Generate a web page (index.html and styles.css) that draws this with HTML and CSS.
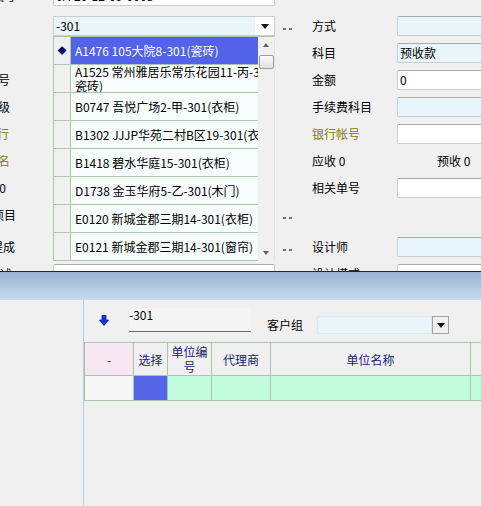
FILE: index.html
```html
<!DOCTYPE html>
<html>
<head>
<meta charset="utf-8">
<link rel="stylesheet" href="styles.css">
</head>
<body>
<div class="top">
  <div class="form">
    <div class="row r0">
      <div class="lclip"><span>单据编号</span></div>
      <div class="spacer"></div>
      <div class="field">0A-20-12-09-0008</div>
    </div>
    <div class="row">
      <div class="lclip"></div>
      <div class="spacer"></div>
      <div class="field combo"><div class="cval">-301</div><div class="carrow"><i class="tri-down"></i></div></div>
      <div class="dots"><i class="dd"></i></div>
      <div class="rlabel">方式</div>
      <div class="field rfield blue"></div>
    </div>
    <div class="row">
      <div class="lclip"></div>
      <div class="spacer"></div>
      <div class="field"></div>
      <div class="dots"></div>
      <div class="rlabel">科目</div>
      <div class="field rfield blue">预收款</div>
    </div>
    <div class="row">
      <div class="lclip e10"><span>房号</span></div>
      <div class="spacer"></div>
      <div class="field"></div>
      <div class="dots"></div>
      <div class="rlabel">金额</div>
      <div class="field rfield">0</div>
    </div>
    <div class="row">
      <div class="lclip e10"><span>等级</span></div>
      <div class="spacer"></div>
      <div class="field"></div>
      <div class="dots"></div>
      <div class="rlabel">手续费科目</div>
      <div class="field rfield blue"></div>
    </div>
    <div class="row">
      <div class="lclip e9 olive"><span>开户银行</span></div>
      <div class="spacer"></div>
      <div class="field"></div>
      <div class="dots"></div>
      <div class="rlabel olive">银行帐号</div>
      <div class="field rfield"></div>
    </div>
    <div class="row">
      <div class="lclip e10 olive"><span>户名</span></div>
      <div class="spacer"></div>
      <div class="field"></div>
      <div class="dots"></div>
      <div class="rlabel wide">应收 0</div>
      <div class="rlabel">预收 0</div>
    </div>
    <div class="row">
      <div class="lclip e6"><span>0</span></div>
      <div class="spacer"></div>
      <div class="field"></div>
      <div class="dots"></div>
      <div class="rlabel">相关单号</div>
      <div class="field rfield"></div>
    </div>
    <div class="row r8">
      <div class="lclip"><span>工程项目</span></div>
      <div class="spacer"></div>
      <div class="field"></div>
      <div class="dots"><i class="dd"></i></div>
      <div class="rlabel"></div>
    </div>
    <div class="row">
      <div class="lclip e15"><span>设计提成</span></div>
      <div class="spacer"></div>
      <div class="field"></div>
      <div class="dots"><i class="dd"></i></div>
      <div class="rlabel">设计师</div>
      <div class="field rfield blue"></div>
    </div>
    <div class="row">
      <div class="lclip e12"><span>描述</span></div>
      <div class="spacer"></div>
      <div class="field"></div>
      <div class="dots"></div>
      <div class="rlabel">设计模式</div>
      <div class="field rfield"></div>
    </div>
  </div>

  <div class="popup">
    <div class="list">
      <div class="item sel"><div class="ind">◆</div><div class="txt"><div>A1476 105大院8-301(瓷砖)</div></div></div>
      <div class="item"><div class="ind"></div><div class="txt"><div>A1525 常州雅居乐常乐花园11-丙-301(</div><div>瓷砖)</div></div></div>
      <div class="item"><div class="ind"></div><div class="txt"><div>B0747 吾悦广场2-甲-301(衣柜)</div></div></div>
      <div class="item"><div class="ind"></div><div class="txt"><div>B1302 JJJP华苑二村B区19-301(衣柜)</div></div></div>
      <div class="item"><div class="ind"></div><div class="txt"><div>B1418 碧水华庭15-301(衣柜)</div></div></div>
      <div class="item"><div class="ind"></div><div class="txt"><div>D1738 金玉华府5-乙-301(木门)</div></div></div>
      <div class="item"><div class="ind"></div><div class="txt"><div>E0120 新城金郡三期14-301(衣柜)</div></div></div>
      <div class="item"><div class="ind"></div><div class="txt"><div>E0121 新城金郡三期14-301(窗帘)</div></div></div>
    </div>
    <div class="sb">
      <i class="tri-up"></i>
      <div class="thumb"></div>
      <i class="tri-down gray sbdown"></i>
    </div>
  </div>
</div>

<div class="bar"></div>
<div class="panel">
  <div class="side"></div>
  <div class="main">
    <div class="filter">
      <svg class="dl" width="10" height="11" viewBox="0 0 10 11"><path d="M3 0.5h4v4.5h2.5l-4.5 5.5l-4.5-5.5h2.5z" fill="#1634e6" stroke="#0a1c90" stroke-width="0.8"/></svg>
      <div class="kw">-301</div>
      <div class="kl">客户组</div>
      <div class="kcombo"><div class="kval"></div><div class="kbtn"><i class="tri-down"></i></div></div>
    </div>
    <table class="grid">
      <colgroup><col class="w0"><col class="w1"><col class="w2"><col class="w3"><col class="w4"><col class="w5"></colgroup>
      <tr class="hd">
        <th class="minus">-</th>
        <th>选择</th>
        <th>单位编号</th>
        <th>代理商</th>
        <th>单位名称</th>
        <th></th>
      </tr>
      <tr class="dr">
        <td class="c0"></td>
        <td class="sel"></td>
        <td class="mint"></td>
        <td class="mint"></td>
        <td class="mint"></td>
        <td class="mint"></td>
      </tr>
    </table>
  </div>
</div>
</body>
</html>
```

FILE: styles.css
```css
* { box-sizing: border-box; }
html, body { margin: 0; padding: 0; }
body {
  width: 481px;
  height: 506px;
  overflow: hidden;
  background: #f0f0f0;
  font-family: "Noto Sans CJK SC", "Liberation Sans", sans-serif;
  font-size: 12px;
  color: #000;
}
i { display: block; font-style: normal; }

.top {
  position: relative;
  height: 272px;
  overflow: hidden;
  border-bottom: 1px solid #262626;
}
.form { margin-top: -18px; }
.row {
  display: flex;
  align-items: flex-start;
  height: 27px;
  padding-top: 4px;
}
.row.r0 { height: 30px; }
.row.r8 { height: 32px; }

.lclip {
  width: 16px;
  height: 20px;
  line-height: 20px;
  overflow: hidden;
  display: flex;
  justify-content: flex-end;
  flex-shrink: 0;
}
.lclip span { flex-shrink: 0; white-space: nowrap; }
.lclip.e15 { padding-right: 1px; }
.lclip.e12 { padding-right: 4px; }
.lclip.e10 { padding-right: 6px; }
.lclip.e9 { padding-right: 7px; }
.lclip.e6 { padding-right: 10px; }
.olive { color: #808000; }
.spacer { width: 37px; flex-shrink: 0; }

.field {
  width: 222px;
  height: 20px;
  flex-shrink: 0;
  border: 1px solid #cdcdcd;
  border-top-color: #ababab;
  border-radius: 2px;
  background: #fff;
  padding-left: 2px;
  line-height: 18px;
  white-space: nowrap;
  overflow: hidden;
}
.blue { background: #e8f6fb; }
.rfield { width: 120px; }

.field.combo {
  display: flex;
  padding: 0;
  border-radius: 0;
  border-color: #cccccc;
}
.cval { flex: 1; background: #e8f6fb; padding-left: 2px; }
.carrow {
  width: 19px;
  background: #fff;
  display: flex;
  align-items: center;
  justify-content: center;
}
.tri-down {
  width: 0;
  height: 0;
  border-left: 4px solid transparent;
  border-right: 4px solid transparent;
  border-top: 5px solid #111;
}
.tri-down.gray { border-top-color: #606060; border-left-width: 3px; border-right-width: 3px; border-top-width: 4px; }
.tri-up {
  width: 0;
  height: 0;
  border-left: 3px solid transparent;
  border-right: 3px solid transparent;
  border-bottom: 4px solid #606060;
}

.dots {
  width: 37px;
  flex-shrink: 0;
  padding: 12px 0 0 8px;
}
.dd {
  width: 9px;
  height: 2px;
  border-left: 3px solid #5a6cc0;
  border-right: 3px solid #5a6cc0;
}
.rlabel {
  width: 85px;
  flex-shrink: 0;
  line-height: 20px;
  white-space: nowrap;
}
.rlabel.wide { width: 125px; }

/* popup list */
.popup {
  position: absolute;
  left: 53px;
  top: 36px;
  width: 222px;
  height: 225px;
  display: flex;
  border-top: 1px solid #a9c9a9;
  border-left: 1px solid #a9c9a9;
  border-right: 1px solid #e4e4e4;
  background: #f0f0f0;
}
.list { width: 204px; }
.item {
  display: flex;
  height: 28px;
  border-bottom: 1px solid #a9c9a9;
}
.ind {
  width: 17px;
  background: #f0f0f0;
  border-right: 1px solid #a9c9a9;
  color: #000070;
  font-size: 9px;
  display: flex;
  align-items: center;
  justify-content: center;
}
.txt {
  flex: 1;
  min-width: 0;
  padding-left: 4px;
  display: flex;
  flex-direction: column;
  justify-content: center;
  line-height: 14px;
  white-space: nowrap;
  overflow: hidden;
  background: #f8fefe;
}
.txt div { height: 14px; flex-shrink: 0; overflow: hidden; }
.item.sel .txt { background: #5263e9; color: #fff; }

.sb {
  width: 16px;
  display: flex;
  flex-direction: column;
  align-items: center;
  padding: 6px 0 6px;
}
.thumb {
  margin-top: 8px;
  width: 15px;
  height: 14px;
  border: 1px solid #9c9c9c;
  border-radius: 2px;
  background: linear-gradient(#fbfbfb, #e2e2e2);
}
.sbdown { margin-top: auto; }

/* bottom */
.bar {
  height: 28px;
  background: linear-gradient(#98b3d2, #c8dbef);
}
.panel { display: flex; height: 206px; }
.side { width: 84px; flex-shrink: 0; border-right: 1px solid #b9c9dc; }
.main { flex: 1; min-width: 0; overflow: hidden; }
.filter {
  display: flex;
  align-items: flex-start;
  height: 42px;
}
.dl { margin: 15px 0 0 15px; flex-shrink: 0; }
.kw {
  margin: 8px 0 0 20px;
  width: 122px;
  height: 24px;
  flex-shrink: 0;
  border-bottom: 1px solid #6e6e6e;
  background: #f4f4f4;
  line-height: 14px;
}
.kl { margin: 15px 0 0 16px; line-height: 20px; white-space: nowrap; }
.kcombo {
  margin: 16px 0 0 14px;
  width: 132px;
  height: 18px;
  flex-shrink: 0;
  display: flex;
}
.kval { flex: 1; background: #e8f6fb; border: 1px solid #dfe8ec; }
.kbtn {
  width: 17px;
  border: 1px solid #a3a3a3;
  background: #f0f0f0;
  display: flex;
  align-items: center;
  justify-content: center;
}

.grid {
  border-collapse: collapse;
  table-layout: fixed;
  width: 446px;
}
.w0 { width: 49px; }
.w1 { width: 34px; }
.w2 { width: 44px; }
.w3 { width: 59px; }
.w4 { width: 200px; }
.w5 { width: 60px; }
.grid th, .grid td {
  border: 1px solid #a9c6a9;
  padding: 0;
}
.grid th {
  font-weight: normal;
  color: #18246e;
  line-height: 15px;
  background: #f0f0f0;
  text-align: center;
}
.grid tr.hd { height: 33px; }
.grid tr.dr { height: 25px; }
.grid th.minus { background: #f6e6ef; color: #18246e; }
.grid td.c0 { background: #f6f6f6; }
.grid td.sel { background: #5566e9; }
.grid td.mint { background: #c2fcdc; }
```
